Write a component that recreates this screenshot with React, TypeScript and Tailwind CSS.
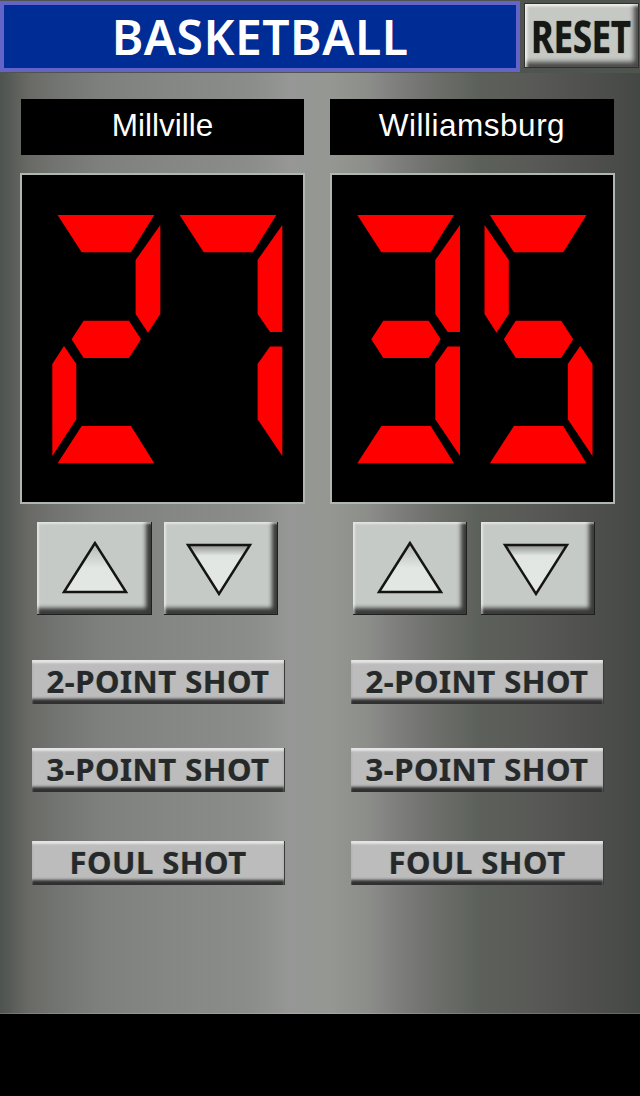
import React from 'react';

const SEG = {
  top: '5.3,0 102,0 78.7,37.3 29.4,37.3',
  mid: '19.3,124.3 31.3,105.7 76.7,105.7 88.7,124.3 76.7,143 31.3,143',
  bottom: '5.3,248.3 29.4,211 78.7,211 102,248.3',
  upperLeft: '0,10 24.3,45 24.3,99 12,117.7 0,99',
  lowerLeft: '11.7,131 24,149 24,204.3 0,241 0,149',
  upperRight: '108,10 108,99 95.7,117.7 83.3,99 83.3,45',
  upperRightFlat: '108,10 108,117 95.7,117 83.3,99 83.3,45',
  lowerRight: '95.7,131 108,149 108,241 83.3,204.3 83.3,149',
  lowerRightFlat: '95.7,131.5 108,131.5 108,241 83.3,204.3 83.3,149',
};

const DIGITS: Record<string, string[]> = {
  '2': [SEG.top, SEG.upperRight, SEG.mid, SEG.lowerLeft, SEG.bottom],
  '7': [SEG.top, SEG.upperRightFlat, SEG.lowerRightFlat],
  '3': [SEG.top, SEG.upperRightFlat, SEG.mid, SEG.lowerRightFlat, SEG.bottom],
  '5': [SEG.top, SEG.upperLeft, SEG.mid, SEG.lowerRight, SEG.bottom],
};

// x offsets are inside the 281-wide black panel
const Score: React.FC<{ digits: [string, number][] }> = ({ digits }) => (
  <div className="w-[285px] h-[331px] mt-[18px] border-2 border-[#b0b6b0] bg-black">
    <svg width="281" height="327" viewBox="0 0 281 327">
      {digits.map(([d, x]) => (
        <g key={d} transform={`translate(${x} 40)`} fill="#ff0000">
          {DIGITS[d].map((p) => (
            <polygon key={p} points={p} />
          ))}
        </g>
      ))}
    </svg>
  </div>
);

const ArrowButton: React.FC<{ dir: 'up' | 'down'; w: string }> = ({ dir, w }) => (
  <button
    className={`${w} h-[93px] flex items-center justify-center bg-[#c6cac6] border-r border-b border-[#1e201e] shadow-[inset_2px_2px_2px_rgba(255,255,255,0.5),inset_-5px_-6px_4px_rgba(0,0,0,0.72)]`}
  >
    <svg
      width="70"
      height="56"
      viewBox="0 0 70 56"
      className={dir === 'up' ? 'ml-[1px]' : 'mr-[3px] mt-[2px]'}
    >
      <defs>
        <linearGradient id={`tri-${dir}`} x1="0" y1="0" x2="0" y2="1">
          <stop offset="0" stopColor={dir === 'up' ? '#b4b8b4' : '#8e928e'} />
          <stop offset={dir === 'up' ? '0.5' : '0.22'} stopColor="#e2e6e2" />
          <stop offset="1" stopColor="#e4e8e4" />
        </linearGradient>
      </defs>
      <polygon
        points={dir === 'up' ? '35,3 4,52 66,52' : '4,4 66,4 35,53'}
        fill={`url(#tri-${dir})`}
        stroke="#141414"
        strokeWidth="2.5"
      />
    </svg>
  </button>
);

const ShotButton: React.FC<{ label: string; className?: string }> = ({ label, className = '' }) => (
  <button
    className={`w-[253px] h-[44px] flex items-center justify-center pb-[2px] bg-[#bcbcbc] border-r border-[#3a3c3a] font-['Noto_Sans',sans-serif] font-bold text-[31px] leading-none tracking-[0.5px] text-[#26292a] [text-shadow:0_1px_1px_rgba(255,255,255,0.3),0_0_1px_rgba(0,0,0,0.6)] shadow-[inset_0_3px_2px_rgba(255,255,255,0.6),inset_0_-6px_3px_-1px_rgba(0,0,0,0.75)] ${className}`}
  >
    {label}
  </button>
);

const TeamName: React.FC<{ name: string; className?: string }> = ({ name, className = '' }) => (
  <div
    className={`h-[56px] pb-[2px] flex items-center justify-center bg-black text-white font-['Liberation_Sans',sans-serif] text-[31.5px] leading-none ${className}`}
  >
    {name}
  </div>
);

export default function App() {
  return (
    <div className="w-[640px] h-[1096px] bg-black overflow-hidden">
      <div className="h-[1014px] border-b border-[#ffffff28] bg-[linear-gradient(90deg,#4f534f_0px,#555955_8px,#6a6b67_30px,#737572_60px,#7e807d_100px,#848683_160px,#8a8d89_250px,#969796_290px,#959792_330px,#8b8d89_370px,#7d7d7c_400px,#6b6d69_440px,#5c605a_480px,#595a57_530px,#4f504d_590px,#444844_640px)]">
        <div className="h-[73px] flex items-start bg-[#50544f] pt-px">
          <div className="w-[520px] h-[71px] flex items-center justify-center border-[4px] border-[#6464c8] bg-[#002c96] text-white font-['Noto_Sans',sans-serif] font-semibold text-[48px] leading-none tracking-[0.5px]">
            BASKETBALL
          </div>
          <button className="ml-[4px] mt-[2px] w-[115px] h-[65px] flex items-center justify-center bg-[#c6c8c4] border border-[#2e302e] font-['Open_Sans',sans-serif] font-bold text-[44px] leading-none text-[#161816] [text-shadow:0_0_1px_#161816] shadow-[inset_2px_2px_3px_rgba(255,255,255,0.8),inset_-4px_-5px_5px_rgba(0,0,0,0.65)]">
            <span className="scale-x-[0.78]">RESET</span>
          </button>
        </div>

        <div className="flex pt-[26px] pl-[20px] gap-[25px]">
          <div className="w-[285px] flex flex-col">
            <TeamName name="Millville" className="ml-px mr-px" />
            <Score digits={[['2', 30.3], ['7', 152.3]]} />
            <div className="flex gap-[12px] pl-[17px] mt-[18px]">
              <ArrowButton dir="up" w="w-[115px]" />
              <ArrowButton dir="down" w="w-[114px]" />
            </div>
            <ShotButton label="2-POINT SHOT" className="ml-[12px] mt-[45px]" />
            <ShotButton label="3-POINT SHOT" className="ml-[12px] mt-[44px]" />
            <ShotButton label="FOUL SHOT" className="ml-[12px] mt-[49px]" />
          </div>

          <div className="w-[285px] flex flex-col">
            <TeamName name="Williamsburg" className="mr-px tracking-[0.5px]" />
            <Score digits={[['3', 20], ['5', 152.5]]} />
            <div className="flex gap-[14px] pl-[23px] mt-[18px]">
              <ArrowButton dir="up" w="w-[114px]" />
              <ArrowButton dir="down" w="w-[114px]" />
            </div>
            <ShotButton label="2-POINT SHOT" className="ml-[21px] mt-[45px]" />
            <ShotButton label="3-POINT SHOT" className="ml-[21px] mt-[44px]" />
            <ShotButton label="FOUL SHOT" className="ml-[21px] mt-[49px]" />
          </div>
        </div>
      </div>
    </div>
  );
}
